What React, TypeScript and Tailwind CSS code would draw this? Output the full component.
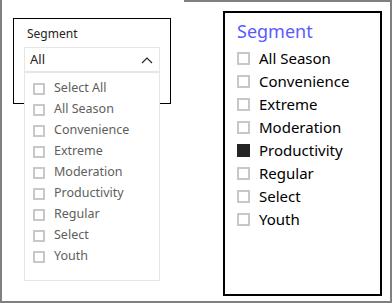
const items = [
  "All Season",
  "Convenience",
  "Extreme",
  "Moderation",
  "Productivity",
  "Regular",
  "Select",
  "Youth",
];

const font = { fontFamily: '"Noto Sans", "Open Sans", sans-serif' };

function DropdownSlicer() {
  return (
    <div className="relative ml-[11px] mt-[18px] h-[86px] w-[158px] border border-black">
      <div className="ml-[13px] mt-[7px] text-[12px] leading-[16px] text-[#252423]">Segment</div>
      <div className="absolute left-[10px] top-[28px] w-[136px] bg-white border border-[#e6e6e6]">
        <div className="flex h-[25px] items-center justify-between border-b-2 border-[#e6e6e6] pl-[5px] pr-[6px]">
          <span className="text-[13px] text-[#252423]">All</span>
          <svg width="12" height="8" viewBox="0 0 12 8" fill="none">
            <path d="M1 7 L6 2 L11 7" stroke="#252423" strokeWidth="1.2" />
          </svg>
        </div>
        <ul className="pt-[5px] pb-[13px]">
          {["Select All", ...items].map((label) => (
            <li key={label} className="flex h-[21px] items-center pl-[8px]">
              <span className="h-[12px] w-[12px] border-2 border-[#c8c8c8]" />
              <span className="ml-[9px] text-[12.5px] text-[#605e5c]">{label}</span>
            </li>
          ))}
        </ul>
      </div>
    </div>
  );
}

function ListSlicer() {
  return (
    <div className="ml-[39px] mt-[9px] h-[285px] w-[159px] border-2 border-black pl-[12px] pt-[6px]">
      <div className="text-[18px] leading-[24px] text-[#5a5aff]">Segment</div>
      <ul className="mt-[4px]">
        {items.map((label) => (
          <li key={label} className="flex h-[23px] items-center">
            {label === "Productivity" ? (
              <span className="h-[13px] w-[13px] bg-[#252423]" />
            ) : (
              <span className="h-[13px] w-[13px] border-2 border-[#c8c8c8]" />
            )}
            <span className="ml-[9px] text-[15px] text-black">{label}</span>
          </li>
        ))}
      </ul>
    </div>
  );
}

export default function App() {
  return (
    <div className="flex h-[303px] w-[392px] bg-white" style={font}>
      <div className="w-[184px] border-b-2 border-l-2 border-[#808080]">
        <DropdownSlicer />
      </div>
      <div className="flex-1 border-b-2 border-r-2 border-t-2 border-[#808080]">
        <ListSlicer />
      </div>
    </div>
  );
}
